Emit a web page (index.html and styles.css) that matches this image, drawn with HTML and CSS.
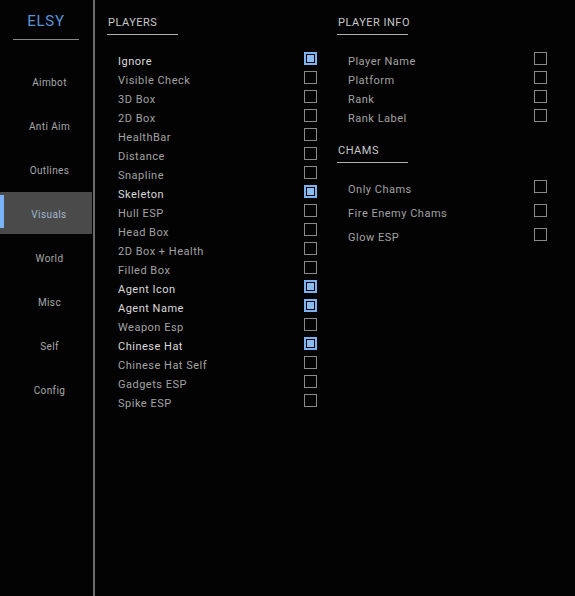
FILE: index.html
```html
<!DOCTYPE html>
<html>
<head>
<meta charset="utf-8">
<link rel="stylesheet" href="styles.css">
</head>
<body>
<div class="app">
  <aside class="sidebar">
    <div class="logo">ELSY</div>
    <nav class="nav">
      <div class="nav-item">Aimbot</div>
      <div class="nav-item">Anti Aim</div>
      <div class="nav-item">Outlines</div>
      <div class="nav-item active">Visuals</div>
      <div class="nav-item">World</div>
      <div class="nav-item">Misc</div>
      <div class="nav-item">Self</div>
      <div class="nav-item">Config</div>
    </nav>
  </aside>
  <main class="main">
    <section class="col col-left">
      <h2 class="section-title">PLAYERS</h2>
      <ul class="opts">
        <li class="opt on"><span>Ignore</span><i class="cb"></i></li>
        <li class="opt"><span>Visible Check</span><i class="cb"></i></li>
        <li class="opt"><span>3D Box</span><i class="cb"></i></li>
        <li class="opt"><span>2D Box</span><i class="cb"></i></li>
        <li class="opt"><span>HealthBar</span><i class="cb"></i></li>
        <li class="opt"><span>Distance</span><i class="cb"></i></li>
        <li class="opt"><span>Snapline</span><i class="cb"></i></li>
        <li class="opt on"><span>Skeleton</span><i class="cb"></i></li>
        <li class="opt"><span>Hull ESP</span><i class="cb"></i></li>
        <li class="opt"><span>Head Box</span><i class="cb"></i></li>
        <li class="opt"><span>2D Box + Health</span><i class="cb"></i></li>
        <li class="opt"><span>Filled Box</span><i class="cb"></i></li>
        <li class="opt on"><span>Agent Icon</span><i class="cb"></i></li>
        <li class="opt on"><span>Agent Name</span><i class="cb"></i></li>
        <li class="opt"><span>Weapon Esp</span><i class="cb"></i></li>
        <li class="opt on"><span>Chinese Hat</span><i class="cb"></i></li>
        <li class="opt"><span>Chinese Hat Self</span><i class="cb"></i></li>
        <li class="opt"><span>Gadgets ESP</span><i class="cb"></i></li>
        <li class="opt"><span>Spike ESP</span><i class="cb"></i></li>
      </ul>
    </section>
    <section class="col col-right">
      <h2 class="section-title">PLAYER INFO</h2>
      <ul class="opts">
        <li class="opt"><span>Player Name</span><i class="cb"></i></li>
        <li class="opt"><span>Platform</span><i class="cb"></i></li>
        <li class="opt"><span>Rank</span><i class="cb"></i></li>
        <li class="opt"><span>Rank Label</span><i class="cb"></i></li>
      </ul>
      <h2 class="section-title chams-title">CHAMS</h2>
      <ul class="opts opts-wide">
        <li class="opt"><span>Only Chams</span><i class="cb"></i></li>
        <li class="opt"><span>Fire Enemy Chams</span><i class="cb"></i></li>
        <li class="opt"><span>Glow ESP</span><i class="cb"></i></li>
      </ul>
    </section>
  </main>
</div>
</body>
</html>
```
FILE: styles.css
```css
* { box-sizing: border-box; }
html, body {
  margin: 0;
  padding: 0;
  background: #030303;
  height: 100%;
}
body {
  font-family: Roboto, "Liberation Sans", sans-serif;
  color: #a0a0a0;
}
.app {
  display: flex;
  width: 575px;
  height: 596px;
  background: #030303;
}
.sidebar {
  width: 95px;
  flex: none;
  border-right: 2px solid #6c6c6c;
  display: flex;
  flex-direction: column;
}
.logo {
  margin: 11px 14px 0 13px;
  padding-bottom: 8px;
  border-bottom: 1px solid #8a8a8a;
  text-align: center;
  color: #5c92d4;
  font-size: 15px;
  letter-spacing: 0.8px;
  line-height: 20px;
  width: 66px;
}
.nav {
  display: flex;
  flex-direction: column;
  margin-top: 20px;
  width: 93px;
}
.nav-item {
  height: 44px;
  display: flex;
  align-items: center;
  justify-content: center;
  padding-left: 6px;
  font-size: 10px;
  letter-spacing: 0.4px;
  color: #a8a8a8;
  position: relative;
}
.nav-item.active {
  background: #4a4a4a;
  color: #9fb6cf;
  height: 42px;
  padding-top: 2px;
  margin: 0 1px 2px 0;
}
.nav-item.active::before {
  content: "";
  position: absolute;
  left: 0;
  top: 3px;
  bottom: 6px;
  width: 4px;
  background: #7ab4f6;
}
.main {
  flex: 1;
  display: flex;
  padding-top: 15px;
}
.col-left {
  width: 230px;
  padding-left: 12px;
  flex: none;
}
.col-right {
  width: 230px;
  padding-left: 12px;
  flex: none;
}
.section-title {
  margin: 0;
  font-weight: normal;
  font-size: 11px;
  letter-spacing: 0.5px;
  color: #c8c8c8;
  width: 71px;
  white-space: nowrap;
  line-height: 15px;
  padding-bottom: 4px;
  padding-left: 1px;
  border-bottom: 1px solid #b0b0b0;
}
.chams-title {
  margin-top: 15px;
}
.opts {
  list-style: none;
  margin: 17px 0 0 0;
  padding: 0 0 0 11px;
}
.opt {
  height: 19px;
  display: flex;
  align-items: center;
  justify-content: space-between;
  font-size: 11px;
  letter-spacing: 0.5px;
  color: #a2a2a2;
}
.opt span {
  line-height: 19px;
}
.opt.on {
  color: #dadada;
}
.cb {
  width: 13px;
  height: 13px;
  border: 1px solid #8a8a8a;
  margin-right: 8px;
  margin-top: -6px;
  position: relative;
}
.opt.on .cb {
  border: 2px solid #7ab2f2;
}
.opt.on .cb::after {
  content: "";
  position: absolute;
  left: 1px;
  top: 1px;
  width: 7px;
  height: 7px;
  background: #8cbcf4;
}
.opts-wide {
  margin-top: 14px;
}
.opts-wide .opt {
  height: 24px;
}
```
